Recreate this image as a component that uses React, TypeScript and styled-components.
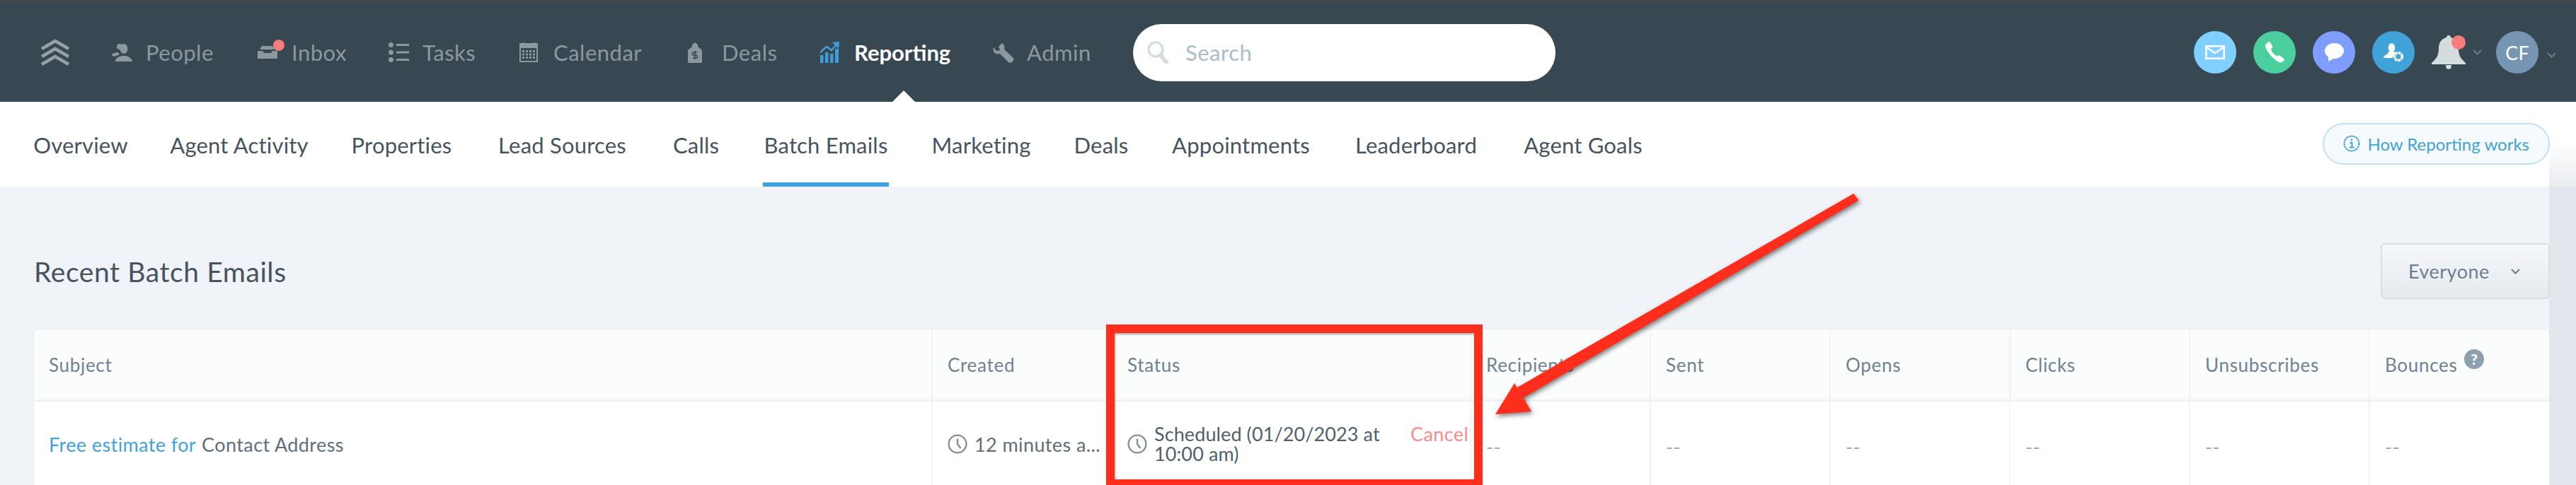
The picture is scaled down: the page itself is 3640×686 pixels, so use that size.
import styled, { createGlobalStyle } from 'styled-components';

const GlobalStyle = createGlobalStyle`
  html, body {
    margin: 0;
    height: 686px;
    overflow: hidden;
    background: #f0f3f7;
  }
  * {
    box-sizing: border-box;
  }
`;

const Page = styled.div`
  position: relative;
  width: 3640px;
  height: 686px;
  overflow: hidden;
  font-family: Lato, 'Liberation Sans', sans-serif;
  color: #4f5f6b;
`;

const TopBar = styled.header`
  display: flex;
  align-items: center;
  height: 144px;
  padding: 0 28px 0 57px;
  background: #384853;
  border-top: 4px solid #45494d;
`;

const Logo = styled.svg`
  width: 42px;
  height: 38px;
  margin-right: 59px;
  flex-shrink: 0;
`;

const NavList = styled.nav`
  display: flex;
  align-items: center;
  gap: 61px;
`;

const NavItem = styled.a<{ $active?: boolean }>`
  position: relative;
  display: flex;
  align-items: center;
  height: 36px;
  font-size: 31px;
  letter-spacing: ${(p) => (p.$active ? 0 : 0.5)}px;
  color: ${(p) => (p.$active ? '#ffffff' : '#8d979e')};
  font-weight: ${(p) => (p.$active ? 700 : 400)};
`;

const NavIconSlot = styled.span`
  display: flex;
  align-items: center;
  width: 48px;
  height: 30px;
  flex-shrink: 0;
`;

const NavLabel = styled.span<{ $width: number }>`
  width: ${(p) => p.$width}px;
  white-space: nowrap;
`;

const ActivePointer = styled.span`
  position: absolute;
  left: 102px;
  top: 72px;
  width: 0;
  height: 0;
  border-left: 16px solid transparent;
  border-right: 16px solid transparent;
  border-bottom: 16px solid #ffffff;
`;

const SearchBox = styled.div`
  display: flex;
  align-items: center;
  gap: 24px;
  width: 597px;
  height: 81px;
  margin-left: 61px;
  padding-left: 20px;
  border-radius: 41px;
  background: #ffffff;
  color: #a9bccb;
  font-size: 31px;
  letter-spacing: 0.5px;
`;

const ActionGroup = styled.div`
  display: flex;
  align-items: center;
  margin-left: auto;
`;

const ActionCircle = styled.span<{ $color: string }>`
  display: flex;
  align-items: center;
  justify-content: center;
  width: 60px;
  height: 60px;
  margin-right: 24px;
  border-radius: 50%;
  background: ${(p) => p.$color};
`;

const Bell = styled.span`
  position: relative;
  display: flex;
  width: 48px;
  height: 48px;
  margin-top: -1px;
`;

const RedDot = styled.span<{ $size: number; $right: number; $top: number }>`
  position: absolute;
  right: ${(p) => p.$right}px;
  top: ${(p) => p.$top}px;
  width: ${(p) => p.$size}px;
  height: ${(p) => p.$size}px;
  border-radius: 50%;
  background: #f87c7e;
`;

const Caret = styled.svg<{ $left: number; $top?: number }>`
  width: 13px;
  height: 8px;
  margin-left: ${(p) => p.$left}px;
  margin-top: ${(p) => p.$top ?? 0}px;
`;

const Avatar = styled.span`
  display: flex;
  align-items: center;
  justify-content: center;
  width: 60px;
  height: 60px;
  margin-left: 20px;
  border-radius: 50%;
  background: #7595b3;
  color: #ffffff;
  font-size: 27px;
`;

const SubNav = styled.div`
  display: flex;
  align-items: stretch;
  height: 120px;
  padding: 0 37px 0 48px;
  background: #ffffff;
`;

const SubNavList = styled.div`
  display: flex;
  gap: 61px;
`;

const SubNavItem = styled.a<{ $active?: boolean; $width: number }>`
  display: flex;
  align-items: center;
  justify-content: center;
  width: ${(p) => p.$width}px;
  padding-top: 2px;
  font-size: 31px;
  letter-spacing: 0.2px;
  white-space: nowrap;
  color: #46545f;
  border-bottom: 6px solid ${(p) => (p.$active ? '#3fa2dc' : 'transparent')};
  border-top: 6px solid transparent;
`;

const HelpButton = styled.a`
  display: flex;
  align-items: center;
  gap: 10px;
  align-self: center;
  height: 59px;
  margin-left: auto;
  margin-top: -2px;
  padding: 0 27px;
  border: 2px solid #bfe1f6;
  border-radius: 30px;
  background: #f4fafd;
  color: #3fa2d9;
  font-size: 24px;
  white-space: nowrap;
`;

const Content = styled.main`
  padding: 80px 37px 0 48px;
`;

const TitleRow = styled.div`
  display: flex;
  align-items: center;
  justify-content: space-between;
  height: 79px;
  margin-bottom: 43px;
`;

const Title = styled.h2`
  margin: 0;
  font-size: 39px;
  font-weight: 400;
  letter-spacing: 0.6px;
  color: #46545f;
`;

const FilterButton = styled.button`
  display: flex;
  align-items: center;
  width: 239px;
  height: 79px;
  padding: 0 0 0 37px;
  border: 2px solid #d9dee3;
  border-radius: 6px;
  background: linear-gradient(#f6f8fa, #e6eaee);
  font-family: inherit;
  font-size: 27px;
  letter-spacing: 0.5px;
  color: #6d7f8e;
`;

const Table = styled.section`
  border-radius: 8px 8px 0 0;
  background: #ffffff;
  box-shadow: 0 0 0 1px #e8ecf0;
`;

const columns = '1268px 254px 507px repeat(5, 254px) 256px';

const HeadRow = styled.div`
  display: grid;
  grid-template-columns: ${columns};
  height: 102px;
  background: #fbfcfc;
  border-bottom: 3px solid #eef1f5;
  border-radius: 8px 8px 0 0;
`;

const HeadCell = styled.div`
  display: flex;
  align-items: center;
  gap: 10px;
  padding-left: 21px;
  font-size: 26px;
  letter-spacing: 0.7px;
  color: #6f8292;
  & + & {
    border-left: 2px solid #f0f3f6;
  }
`;

const HelpBadge = styled.span`
  display: flex;
  align-items: center;
  justify-content: center;
  width: 28px;
  height: 28px;
  margin-top: -16px;
  border-radius: 50%;
  background: #8ca0af;
  color: #ffffff;
  font-size: 21px;
  font-weight: 900;
`;

const BodyRow = styled.div`
  display: grid;
  grid-template-columns: ${columns};
  height: 120px;
`;

const BodyCell = styled.div`
  display: flex;
  align-items: center;
  padding-left: 21px;
  font-size: 27px;
  letter-spacing: 0.4px;
  color: #5f6e7a;
  & + & {
    border-left: 2px solid #f2f4f7;
  }
`;

const SubjectLink = styled.a`
  color: #3fa2dc;
  margin-right: 8px;
`;

const Dashes = styled.span`
  color: #9aa9b5;
  margin-top: 6px;
`;

const ClockIcon = styled.svg`
  width: 28px;
  height: 28px;
  margin-right: 10px;
  flex-shrink: 0;
`;

const StatusText = styled.div`
  width: 340px;
  line-height: 28px;
  letter-spacing: 0.1px;
  color: #4f5f6b;
`;

const CancelLink = styled.a`
  align-self: flex-start;
  margin-top: 32px;
  margin-left: 22px;
  line-height: 28px;
  color: #fb8a8c;
`;

const RedBox = styled.div`
  position: absolute;
  left: 1563px;
  top: 459px;
  width: 532px;
  height: 231px;
  border: solid #ff2d1c;
  border-width: 12px;
  box-shadow: inset 1px 2px 3px rgba(0, 0, 0, 0.35);
`;

const Arrow = styled.svg`
  position: absolute;
  left: 2090px;
  top: 260px;
  width: 550px;
  height: 340px;
  filter: drop-shadow(2px 3px 3px rgba(0, 0, 0, 0.5));
`;

const EdgeShade = styled.div`
  position: absolute;
  right: 0;
  top: 200px;
  bottom: 0;
  width: 38px;
  background: linear-gradient(to bottom, rgba(214, 219, 226, 0), rgba(214, 219, 226, 0.5) 60px);
`;

const navIcon = '#8d979e';

const LogoMark = () => (
  <Logo viewBox="0 0 42 38" fill="none" stroke="#97a0a5" strokeWidth="4.6">
    <polyline points="2,14 21,3 40,14" />
    <polyline points="2,25 21,14 40,25" />
    <polyline points="2,36 21,25 40,36" />
  </Logo>
);

const PeopleIcon = () => (
  <svg width="29" height="26" viewBox="0 0 29 26" fill={navIcon}>
    <ellipse cx="17" cy="8" rx="5.5" ry="7" />
    <circle cx="11" cy="5" r="4" />
    <path d="M0 16c2-2 6-3 9-3l2 3-6 2.5H1zM5 26c0-5 5-7 9-8h6c4 1 8 3 9 8z" />
  </svg>
);

const InboxIcon = () => (
  <svg width="28" height="18" viewBox="0 0 28 18" fill={navIcon}>
    <path d="M6 0h15l3 5H3zM0 7h7l2 3h10l2-3h7v11H0z" />
  </svg>
);

const TasksIcon = () => (
  <svg width="29" height="28" viewBox="0 0 29 28" fill={navIcon}>
    <circle cx="3.5" cy="3.5" r="3.5" />
    <circle cx="3.5" cy="14" r="3.5" />
    <circle cx="3.5" cy="24.5" r="3.5" />
    <rect x="11" y="2" width="18" height="3" />
    <rect x="11" y="12.5" width="18" height="3" />
    <rect x="11" y="23" width="18" height="3" />
  </svg>
);

const CalendarIcon = () => (
  <svg width="26" height="28" viewBox="0 0 26 28" fill={navIcon}>
    <path d="M0 1h4V0h2v1h14V0h2v1h4v27H0zM2 8v18h22V8z" fillRule="evenodd" />
    {[5, 10, 15, 20].map((x) =>
      [11, 15.5, 20].map((y) => <rect key={`${x}-${y}`} x={x - 1} y={y} width="3" height="3" />),
    )}
  </svg>
);

const DealsIcon = () => (
  <svg width="20" height="29" viewBox="0 0 20 29">
    <path d="M10 0l4 3v3l5 4c1 1 1 2 1 3v14c0 1-1 2-2 2H2c-1 0-2-1-2-2V13c0-1 0-2 1-3l5-4V3z" fill={navIcon} />
    <path d="M13 14h-5c-2 0-2 4 0 4h4c2 0 2 4 0 4H7M10 12v12" fill="none" stroke="#384853" strokeWidth="1.6" />
  </svg>
);

const ReportingIcon = () => (
  <svg width="27" height="30" viewBox="0 0 27 30" fill="#3c9dd8">
    <rect x="0" y="19" width="4.5" height="11" />
    <rect x="7" y="15" width="4.5" height="15" />
    <rect x="14" y="17" width="4.5" height="13" />
    <rect x="21" y="10" width="5" height="20" />
    <path d="M0 15l9-8 7 5L23 4" fill="none" stroke="#3c9dd8" strokeWidth="2.6" />
    <path d="M17 1l10-1-1 10z" />
  </svg>
);

const WrenchIcon = () => (
  <svg width="30" height="29" viewBox="0 0 30 29" fill={navIcon}>
    <path d="M13 1L8 6l2 5-5 1-4-5c-2 6 2 11 9 9l12 12c2 1 4 1 6-1 2-2 2-4 0-6L16 10c1-4 0-7-3-9z" />
  </svg>
);

const SearchIcon = () => (
  <svg width="30" height="32" viewBox="0 0 30 32" fill="none" stroke="#d3dde3">
    <circle cx="12" cy="12" r="10" strokeWidth="3.5" />
    <path d="M19 20l8 10" strokeWidth="6" strokeLinecap="round" />
  </svg>
);

const MailIcon = () => (
  <svg width="28" height="20" viewBox="0 0 28 20" fill="none" stroke="#ffffff" strokeWidth="2.6">
    <rect x="1.3" y="1.3" width="25.4" height="17.4" />
    <path d="M2 3l12 8 12-8" />
  </svg>
);

const PhoneIcon = () => (
  <svg width="28" height="30" viewBox="0 0 28 30" fill="#ffffff">
    <path d="M3 2c2-2 4-2 5-1l3 5c1 1 0 3-2 4 0 3 5 10 9 10 2-1 3-1 4 0l5 4c1 1 1 2 0 3l-3 2c-3 1-7-1-12-6C5 16 1 9 1 6c0-2 1-3 2-4z" />
  </svg>
);

const ChatIcon = () => (
  <svg width="28" height="26" viewBox="0 0 28 26" fill="#ffffff">
    <ellipse cx="14.5" cy="11" rx="13.5" ry="11" />
    <path d="M6 17v9l9-5z" />
  </svg>
);

const AgentIcon = () => (
  <svg width="29" height="27" viewBox="0 0 29 27" fill="#ffffff">
    <ellipse cx="11.5" cy="6.5" rx="4.8" ry="6.5" />
    <path d="M7 12h9l1 3c-3 1-4 3-4 6H0c1-4 4-5 6-6z" />
    <circle cx="21" cy="19" r="5.4" fill="none" stroke="#ffffff" strokeWidth="3.6" strokeDasharray="4 0.9" />
  </svg>
);

const BellIcon = () => (
  <svg width="48" height="48" viewBox="0 0 48 48" fill="#d5dcde">
    <path d="M24 0c2 0 3 1 3 3 8 2 11 8 11 16 0 9 3 14 10 20v2H0v-2c7-6 10-11 10-20 0-8 3-14 11-16 0-2 1-3 3-3z" />
    <path d="M20 42h8c0 3-1 6-4 6s-4-3-4-6z" />
  </svg>
);

const Chevron = ({ left, top }: { left: number; top?: number }) => (
  <Caret $left={left} $top={top} viewBox="0 0 13 8" fill="none" stroke="#6d7e89" strokeWidth="2">
    <polyline points="1,1 6.5,6.5 12,1" />
  </Caret>
);

const InfoIcon = () => (
  <svg width="24" height="24" viewBox="0 0 24 24" fill="none" stroke="#3fa2d9">
    <circle cx="12" cy="12" r="10.5" strokeWidth="2" strokeDasharray="3 0.7" />
    <circle cx="12" cy="7" r="1.4" fill="#3fa2d9" stroke="none" />
    <path d="M9.5 11H12.5V17.5M9 17.5H15.5" strokeWidth="2" />
  </svg>
);

const Clock = () => (
  <ClockIcon viewBox="0 0 28 28" fill="none" stroke="#858f96" strokeWidth="2.4">
    <circle cx="14" cy="14" r="12.4" />
    <path d="M14 6.5V14l4.5 6" />
  </ClockIcon>
);

const mainNav = [
  { label: 'People', width: 97, icon: <PeopleIcon /> },
  { label: 'Inbox', width: 76, icon: <InboxIcon />, dot: true },
  { label: 'Tasks', width: 76, icon: <TasksIcon /> },
  { label: 'Calendar', width: 129, icon: <CalendarIcon /> },
  { label: 'Deals', width: 78, icon: <DealsIcon /> },
  { label: 'Reporting', width: 135, icon: <ReportingIcon />, active: true },
  { label: 'Admin', width: 89, icon: <WrenchIcon /> },
];

const subNav = [
  { label: 'Overview', width: 132 },
  { label: 'Agent Activity', width: 194 },
  { label: 'Properties', width: 143 },
  { label: 'Lead Sources', width: 189 },
  { label: 'Calls', width: 67 },
  { label: 'Batch Emails', width: 178 },
  { label: 'Marketing', width: 139 },
  { label: 'Deals', width: 78 },
  { label: 'Appointments', width: 195 },
  { label: 'Leaderboard', width: 178 },
  { label: 'Agent Goals', width: 172 },
];

const metricHeads = ['Recipients', 'Sent', 'Opens', 'Clicks', 'Unsubscribes'];

export default function App() {
  return (
    <Page>
      <GlobalStyle />
      <TopBar>
        <LogoMark />
        <NavList>
          {mainNav.map((item) => (
            <NavItem key={item.label} $active={item.active}>
              <NavIconSlot>{item.icon}</NavIconSlot>
              {item.dot && <RedDot $size={16} $right={86} $top={0} />}
              <NavLabel $width={item.width}>{item.label}</NavLabel>
              {item.active && <ActivePointer />}
            </NavItem>
          ))}
        </NavList>
        <SearchBox>
          <SearchIcon />
          Search
        </SearchBox>
        <ActionGroup>
          <ActionCircle $color="#80d0ff">
            <MailIcon />
          </ActionCircle>
          <ActionCircle $color="#4ccf9f">
            <PhoneIcon />
          </ActionCircle>
          <ActionCircle $color="#7f9cff">
            <ChatIcon />
          </ActionCircle>
          <ActionCircle $color="#3fa2d9">
            <AgentIcon />
          </ActionCircle>
          <Bell>
            <BellIcon />
            <RedDot $size={20} $right={0} $top={0} />
          </Bell>
          <Chevron left={10} />
          <Avatar>CF</Avatar>
          <Chevron left={12} top={8} />
        </ActionGroup>
      </TopBar>
      <SubNav>
        <SubNavList>
          {subNav.map((item) => (
            <SubNavItem key={item.label} $width={item.width} $active={item.label === 'Batch Emails'}>
              {item.label}
            </SubNavItem>
          ))}
        </SubNavList>
        <HelpButton>
          <InfoIcon />
          How Reporting works
        </HelpButton>
      </SubNav>
      <Content>
        <TitleRow>
          <Title>Recent Batch Emails</Title>
          <FilterButton>
            Everyone
            <Chevron left={30} />
          </FilterButton>
        </TitleRow>
        <Table>
          <HeadRow>
            <HeadCell>Subject</HeadCell>
            <HeadCell>Created</HeadCell>
            <HeadCell>Status</HeadCell>
            {metricHeads.map((label) => (
              <HeadCell key={label}>{label}</HeadCell>
            ))}
            <HeadCell>
              Bounces
              <HelpBadge>?</HelpBadge>
            </HeadCell>
          </HeadRow>
          <BodyRow>
            <BodyCell>
              <SubjectLink>Free estimate for</SubjectLink>
              Contact Address
            </BodyCell>
            <BodyCell>
              <Clock />
              12 minutes a...
            </BodyCell>
            <BodyCell>
              <Clock />
              <StatusText>Scheduled (01/20/2023 at 10:00 am)</StatusText>
              <CancelLink>Cancel</CancelLink>
            </BodyCell>
            {[...metricHeads, 'Bounces'].map((label) => (
              <BodyCell key={label}>
                <Dashes>--</Dashes>
              </BodyCell>
            ))}
          </BodyRow>
        </Table>
      </Content>
      <EdgeShade />
      <RedBox />
      <Arrow viewBox="0 0 550 340">
        <path d="M529 15 L535 23 L62 302 L54 289z" fill="#ff2d1c" stroke="#ff2d1c" strokeWidth="2" strokeLinejoin="round" />
        <path d="M23 326L50 282L74 322z" fill="#ff2d1c" />
      </Arrow>
    </Page>
  );
}
